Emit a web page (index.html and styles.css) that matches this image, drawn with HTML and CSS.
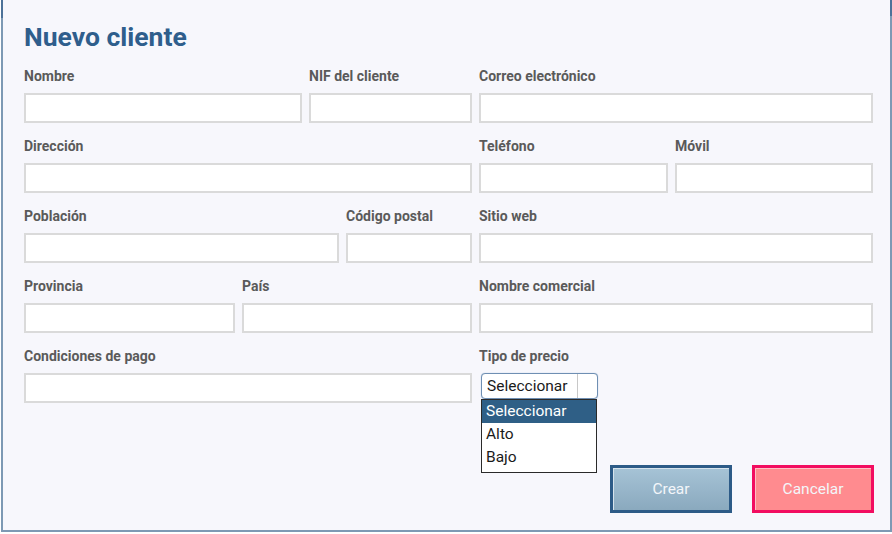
FILE: index.html
```html
<!DOCTYPE html>
<html lang="es">
<head>
<meta charset="utf-8">
<title>Nuevo cliente</title>
<link rel="stylesheet" href="styles.css">
</head>
<body>
<div class="panel">
  <h1 class="title">Nuevo cliente</h1>
  <div class="form">
    <div class="row">
      <div class="half split-a">
        <div class="field"><label>Nombre</label><div class="input"></div></div>
        <div class="field"><label>NIF del cliente</label><div class="input"></div></div>
      </div>
      <div class="half">
        <div class="field"><label>Correo electrónico</label><div class="input"></div></div>
      </div>
    </div>
    <div class="row">
      <div class="half">
        <div class="field"><label>Dirección</label><div class="input"></div></div>
      </div>
      <div class="half split-b">
        <div class="field"><label>Teléfono</label><div class="input"></div></div>
        <div class="field"><label>Móvil</label><div class="input"></div></div>
      </div>
    </div>
    <div class="row">
      <div class="half split-c">
        <div class="field"><label>Población</label><div class="input"></div></div>
        <div class="field"><label>Código postal</label><div class="input"></div></div>
      </div>
      <div class="half">
        <div class="field"><label>Sitio web</label><div class="input"></div></div>
      </div>
    </div>
    <div class="row">
      <div class="half split-d">
        <div class="field"><label>Provincia</label><div class="input"></div></div>
        <div class="field"><label>País</label><div class="input"></div></div>
      </div>
      <div class="half">
        <div class="field"><label>Nombre comercial</label><div class="input"></div></div>
      </div>
    </div>
    <div class="row">
      <div class="half">
        <div class="field"><label>Condiciones de pago</label><div class="input"></div></div>
      </div>
      <div class="half">
        <div class="field"><label>Tipo de precio</label>
          <div class="select-wrap">
            <div class="select"><span class="select-text">Seleccionar</span><span class="select-btn"></span></div>
            <ul class="dropdown">
              <li class="opt active">Seleccionar</li>
              <li class="opt">Alto</li>
              <li class="opt">Bajo</li>
            </ul>
          </div>
        </div>
      </div>
    </div>
  </div>
  <div class="actions">
    <button class="btn btn-create">Crear</button>
    <button class="btn btn-cancel">Cancelar</button>
  </div>
</div>
</body>
</html>
```

FILE: styles.css
```css
html, body {
  margin: 0;
  padding: 0;
  background: #ffffff;
}
body {
  font-family: Roboto, "Liberation Sans", Arial, sans-serif;
}
.panel {
  position: relative;
  box-sizing: border-box;
  width: 891px;
  height: 532px;
  margin-left: 1px;
  background: #f7f7fc;
  border: 2px solid #7d99b4;
  border-top: none;
  padding: 22px 16px 0 21px;
}
.panel::before,
.panel::after {
  content: "";
  position: absolute;
  top: 0;
  width: 2px;
  height: 18px;
  background: #4d7299;
}
.panel::before { left: -2px; }
.panel::after { right: -2px; height: 16px; }
.title {
  margin: 0;
  font-size: 26.5px;
  line-height: 30px;
  font-weight: 700;
  color: #2f5e8c;
}
.form {
  margin-top: 16px;
  display: flex;
  flex-direction: column;
  gap: 15px;
}
.row {
  display: grid;
  grid-template-columns: 448px 394px;
  column-gap: 7px;
}
.half {
  display: grid;
  grid-template-columns: 1fr;
  column-gap: 7px;
}
.split-a { grid-template-columns: 278px 163px; }
.split-b { grid-template-columns: 189px 198px; }
.split-c { grid-template-columns: 315px 126px; }
.split-d { grid-template-columns: 211px 230px; }
.field label {
  display: block;
  font-size: 14px;
  line-height: 16px;
  font-weight: 700;
  color: #5a5a5a;
  margin-bottom: 9px;
}
.input {
  box-sizing: border-box;
  height: 30px;
  background: #ffffff;
  border: 2px solid #dadada;
}
.select-wrap {
  position: relative;
  margin-left: 2px;
  margin-top: 1px;
  width: 117px;
  height: 29px;
}
.select {
  box-sizing: border-box;
  display: flex;
  height: 26px;
  width: 117px;
  background: #ffffff;
  border: 1px solid #6f8fb3;
  border-radius: 4px;
  box-shadow: 0 0 1px #9ab4d0;
}
.select-text {
  flex: 1;
  font-size: 15.5px;
  line-height: 24px;
  color: #1a1a1a;
  padding-left: 5px;
  border-right: 1px solid #c8c8c8;
}
.select-btn {
  width: 19px;
}
.dropdown {
  position: absolute;
  left: 0;
  top: 26px;
  box-sizing: border-box;
  width: 116px;
  margin: 0;
  padding: 0 0 3px;
  list-style: none;
  background: #ffffff;
  border: 1px solid #2a2a2a;
}
.opt {
  font-size: 15.5px;
  line-height: 23px;
  height: 23px;
  padding-left: 4px;
  color: #1a1a1a;
}
.opt.active {
  background: #2f5f86;
  color: #ffffff;
}
.actions {
  display: flex;
  justify-content: flex-end;
  gap: 20px;
  margin-top: 62px;
}
.btn {
  box-sizing: border-box;
  width: 122px;
  height: 48px;
  border-width: 3px;
  border-style: solid;
  font-family: Roboto, "Liberation Sans", Arial, sans-serif;
  font-size: 15.5px;
  color: #f3f6fa;
  padding: 0;
}
.btn-create {
  border-color: #2d5b87;
  background: linear-gradient(#a6c3d6, #8aa9be);
  box-shadow: inset 1px 1px 0 #d6e3ec;
}
.btn-cancel {
  border-color: #f20d60;
  background: #ff8b8f;
  box-shadow: inset 1px 1px 0 #ffc0c3;
}
```
